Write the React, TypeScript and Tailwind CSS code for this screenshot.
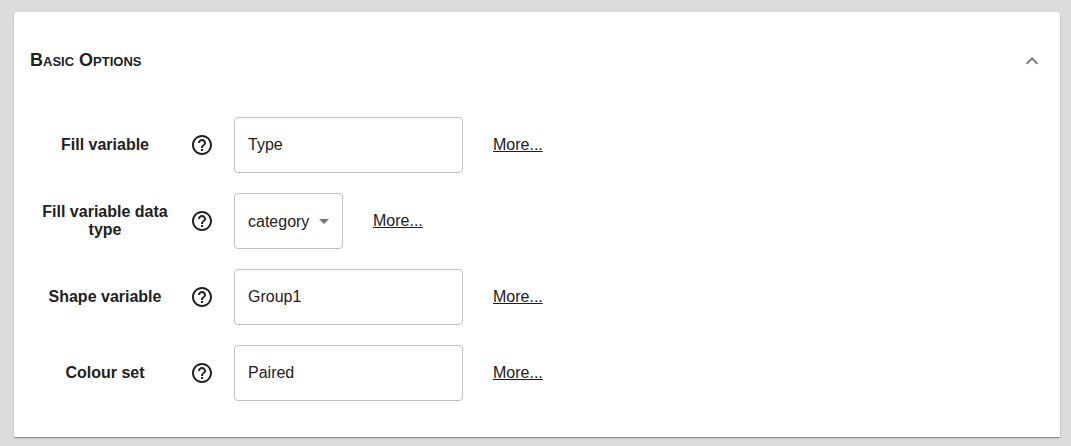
import { useState } from "react";

type Option = {
  id: string;
  label: string;
  value: string;
  choices?: string[];
};

const options: Option[] = [
  { id: "fill-variable", label: "Fill variable", value: "Type" },
  {
    id: "fill-type",
    label: "Fill variable data type",
    value: "category",
    choices: ["category", "numeric"],
  },
  { id: "shape-variable", label: "Shape variable", value: "Group1" },
  { id: "colour-set", label: "Colour set", value: "Paired" },
];

function HelpIcon() {
  return (
    <svg viewBox="0 0 24 24" className="size-6 fill-current" aria-hidden="true">
      <path d="M11 18h2v-2h-2v2zm1-16C6.48 2 2 6.48 2 12s4.480 10 10 10 10-4.480 10-10S17.520 2 12 2zm0 18c-4.410 0-8-3.590-8-8s3.590-8 8-8 8 3.590 8 8-3.590 8-8 8zm0-14c-2.210 0-4 1.790-4 4h2c0-1.100.9-2 2-2s2 .9 2 2c0 2-3 1.750-3 5h2c0-2.250 3-2.500 3-5 0-2.210-1.790-4-4-4z" />
    </svg>
  );
}

function OptionRow({ option }: { option: Option }) {
  const [value, setValue] = useState(option.value);

  return (
    <div className="flex items-center">
      <label
        htmlFor={option.id}
        className="w-[150px] shrink-0 px-2 text-center text-base leading-[18px] font-bold"
      >
        {option.label}
      </label>
      <button type="button" aria-label={`Help: ${option.label}`} className="mx-[10px] shrink-0">
        <HelpIcon />
      </button>
      <div className="relative ml-[10px] shrink-0">
        {option.choices ? (
          <>
            <select
              id={option.id}
              value={value}
              onChange={(e) => setValue(e.target.value)}
              className="block h-14 w-[109px] appearance-none rounded border border-[#c1c1c1] bg-white pt-px pl-[13px] text-base outline-none"
            >
              {option.choices.map((choice) => (
                <option key={choice}>{choice}</option>
              ))}
            </select>
            <svg
              viewBox="0 0 10 5"
              className="pointer-events-none absolute inset-y-0 right-[14px] my-auto h-[5px] w-[10px] fill-[#757575]"
              aria-hidden="true"
            >
              <path d="M0 0l5 5 5-5z" />
            </svg>
          </>
        ) : (
          <input
            id={option.id}
            type="text"
            value={value}
            onChange={(e) => setValue(e.target.value)}
            className="block h-14 w-[229px] rounded border border-[#c1c1c1] bg-white px-[13px] text-base outline-none"
          />
        )}
      </div>
      <a href="#more" className="ml-[30px] underline">
        More...
      </a>
    </div>
  );
}

export default function App() {
  const [open, setOpen] = useState(true);

  return (
    <main className="min-h-screen bg-[#dcdcdc] pt-3 pr-[11px] pl-[14px] font-['Liberation_Sans',Arial,sans-serif] text-base text-[#212121]">
      <section className="rounded-t bg-white px-4 pb-9 shadow-[0_2px_1px_-1px_rgba(0,0,0,0.2),0_1px_1px_0_rgba(0,0,0,0.14),0_1px_3px_0_rgba(0,0,0,0.12)]">
        <h2 className="text-lg font-bold">
          <button
            type="button"
            aria-expanded={open}
            onClick={() => setOpen(!open)}
            className="flex h-24 w-full items-center justify-between pr-[6px] text-left [font-variant-caps:small-caps]"
          >
            Basic Options
            <svg
              viewBox="0 0 12 10"
              className="h-[10px] w-3 fill-none stroke-[#757575] stroke-2"
              aria-hidden="true"
            >
              <path d="M.7 8.700L6 3.400 11.300 8.700" />
            </svg>
          </button>
        </h2>
        {open && (
          <div className="flex flex-col gap-5 pt-[9px]">
            {options.map((option) => (
              <OptionRow key={option.id} option={option} />
            ))}
          </div>
        )}
      </section>
    </main>
  );
}
